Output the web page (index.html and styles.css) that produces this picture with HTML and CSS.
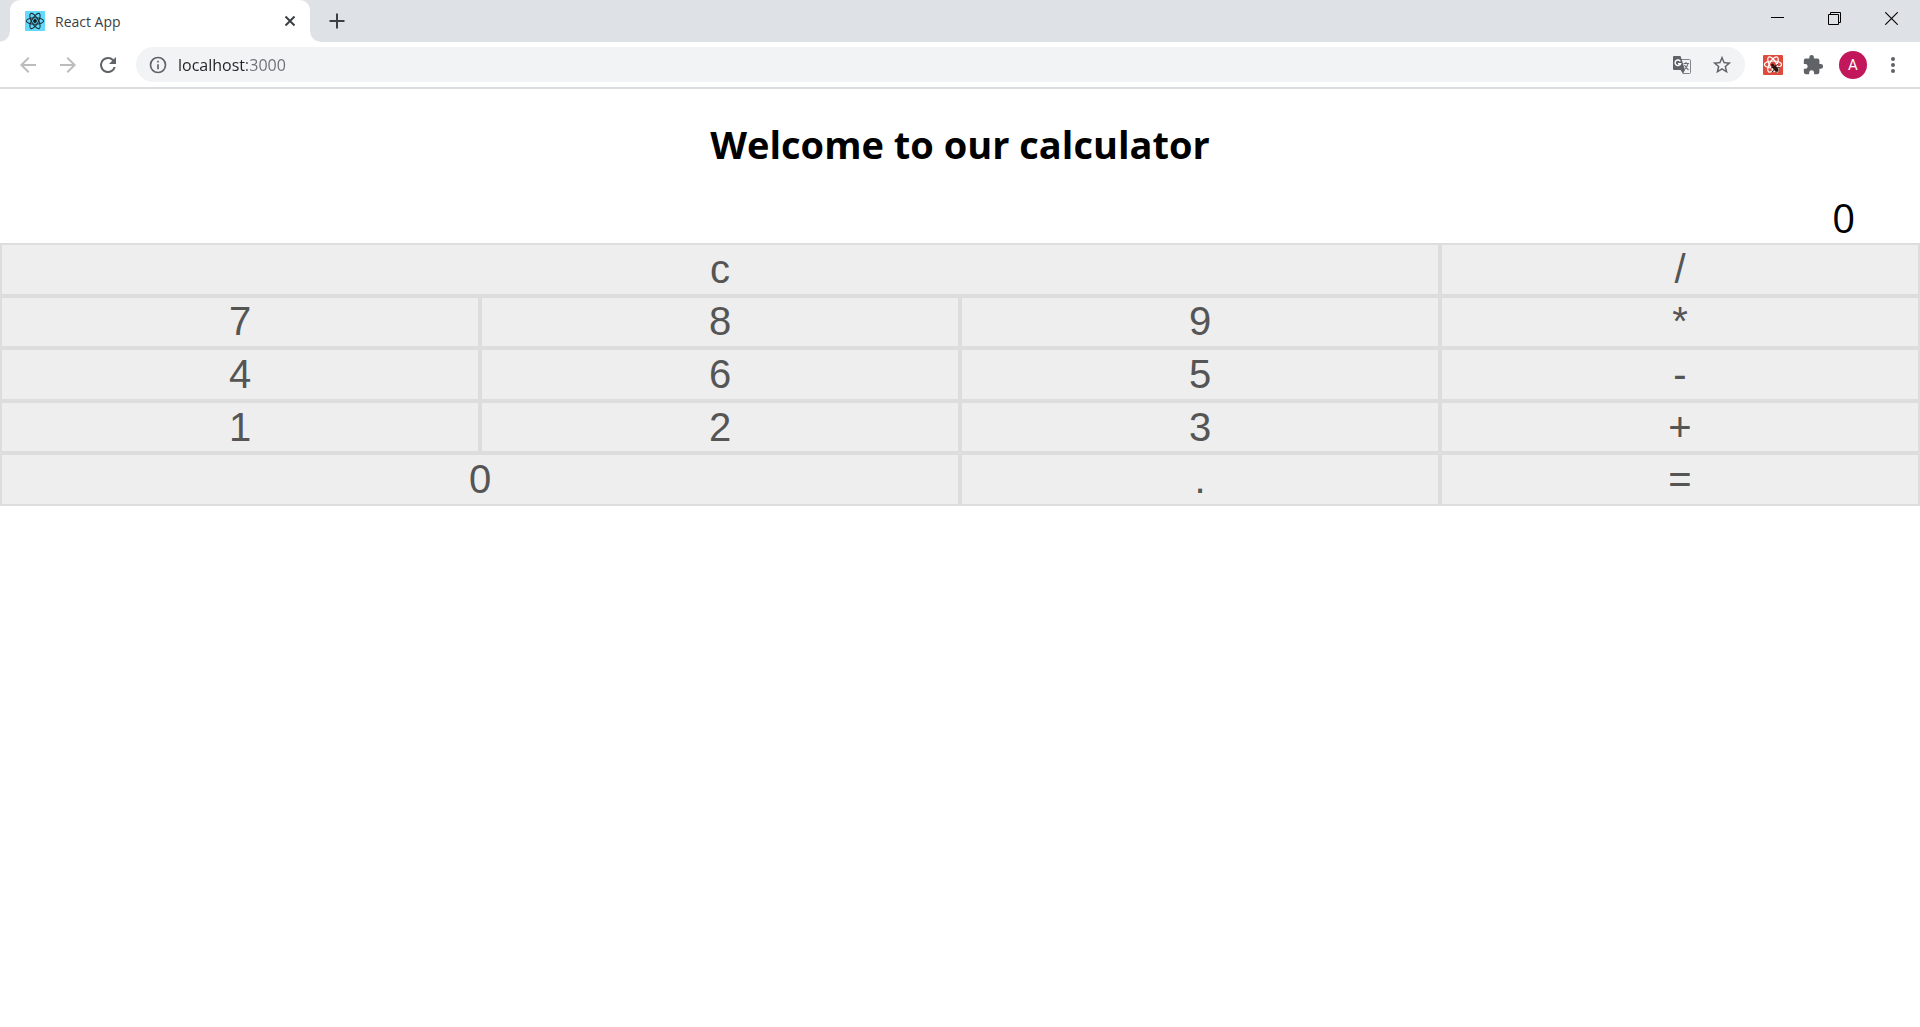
FILE: index.html
```html
<!DOCTYPE html>
<html lang="en">
<head>
<meta charset="utf-8">
<meta name="viewport" content="width=device-width, initial-scale=1">
<title>React App</title>
<link rel="stylesheet" href="styles.css">
</head>
<body>
<header class="browser">
  <div class="tab-strip">
    <div class="tab">
      <svg class="tab-favicon" width="20" height="20" viewBox="0 0 20 20" aria-hidden="true">
        <rect width="20" height="20" rx="1" fill="#61dafb"/>
        <g fill="none" stroke="#20303a" stroke-width="1.1">
          <ellipse cx="10" cy="10" rx="8.6" ry="3.3"/>
          <ellipse cx="10" cy="10" rx="8.6" ry="3.3" transform="rotate(60 10 10)"/>
          <ellipse cx="10" cy="10" rx="8.6" ry="3.3" transform="rotate(120 10 10)"/>
        </g>
        <circle cx="10" cy="10" r="1.9" fill="#101820"/>
      </svg>
      <span class="tab-title">React App</span>
      <button class="tab-close" type="button" aria-label="Close tab">
        <svg width="12" height="12" viewBox="0 0 12 12"><path d="M1.500 1.500l9 9M10.500 1.500l-9 9" stroke="#3c4043" stroke-width="2"/></svg>
      </button>
    </div>
    <button class="new-tab" type="button" aria-label="New tab">
      <svg width="16" height="16" viewBox="0 0 16 16"><path d="M8 .5v15M.5 8h15" stroke="#3c4043" stroke-width="2"/></svg>
    </button>
    <div class="window-controls">
      <button type="button" aria-label="Minimize"><svg width="13" height="13" viewBox="0 0 13 13"><path d="M0 5.500h13" stroke="#000"/></svg></button>
      <button type="button" aria-label="Restore"><svg width="13" height="13" viewBox="0 0 13 13"><path d="M.5 2.500h10v10h-10zM2.500 2.500v-2h10v10h-2" fill="none" stroke="#000"/></svg></button>
      <button type="button" aria-label="Close"><svg width="13" height="13" viewBox="0 0 13 13"><path d="M.3.3l12.400 12.400M12.700.3L.3 12.700" stroke="#000" stroke-width="1.1"/></svg></button>
    </div>
  </div>
  <div class="toolbar">
    <nav class="nav-buttons" aria-label="Navigation">
      <button class="icon-button" type="button" aria-label="Back"><svg width="24" height="24" viewBox="0 0 24 24" fill="#babcbe"><path d="M20 11H7.830l5.590-5.590L12 4l-8 8 8 8 1.410-1.410L7.830 13H20z"/></svg></button>
      <button class="icon-button" type="button" aria-label="Forward"><svg width="24" height="24" viewBox="0 0 24 24" fill="#babcbe"><path d="M12 4l-1.410 1.410L16.170 11H4v2h12.170l-5.580 5.590L12 20l8-8z"/></svg></button>
      <button class="icon-button" type="button" aria-label="Reload"><svg width="24" height="24" viewBox="0 0 24 24" fill="#5f6368"><path d="M17.650 6.350A7.960 7.960 0 0 0 12 4a8 8 0 1 0 7.730 10h-2.080A6 6 0 1 1 12 6c1.660 0 3.140.69 4.220 1.780L13 11h7V4z"/></svg></button>
    </nav>
    <div class="address-bar">
      <svg width="20" height="20" viewBox="0 0 24 24" fill="#5f6368" aria-hidden="true"><path d="M11 7h2v2h-2zm0 4h2v6h-2zm1-9a10 10 0 1 0 0 20 10 10 0 0 0 0-20zm0 18a8 8 0 1 1 0-16 8 8 0 0 1 0 16z"/></svg>
      <input class="address" type="text" value="localhost:3000" aria-label="Address">
      <button class="icon-button" type="button" aria-label="Translate this page">
        <svg width="18" height="18" viewBox="0 0 18 18">
          <path d="M8 3.500h8.500a1 1 0 0 1 1 1v12a1 1 0 0 1-1 1H10z" fill="#f1f3f4" stroke="#808387"/>
          <path d="M1 0h6.500l1 3L12 14H1a1 1 0 0 1-1-1V1a1 1 0 0 1 1-1zM7.500 14H12l-2 3.500z" fill="#5f6368"/>
          <path d="M7.300 5.300a2.800 2.800 0 1 0 .3 2.400H5" fill="none" stroke="#fff" stroke-width="1.400"/>
          <path d="M10.500 7.500h5.500M13 6v1.500M15 7.500c-.5 2.500-1.500 4-3 5.500M11.500 9c1 2 2.300 3.500 4 5" fill="none" stroke="#6b6e72" stroke-width="1.100"/>
        </svg>
      </button>
      <button class="icon-button" type="button" aria-label="Bookmark this page"><svg width="22" height="22" viewBox="0 0 24 24" fill="#5f6368"><path d="M22 9.240l-7.190-.62L12 2 9.190 8.630 2 9.240l5.460 4.730L5.820 21 12 17.270 18.180 21l-1.630-7.030zM12 15.400l-3.760 2.270 1-4.280-3.320-2.880 4.380-.38L12 6.100l1.710 4.040 4.380.38-3.320 2.880 1 4.280z"/></svg></button>
    </div>
    <div class="extension-buttons">
      <button class="icon-button" type="button" aria-label="React Developer Tools">
        <svg width="20" height="20" viewBox="0 0 20 20">
          <rect width="20" height="20" rx="1" fill="#de4b3c"/>
          <g fill="none" stroke="#fff" stroke-width="1.200">
            <ellipse cx="10" cy="9.500" rx="8.600" ry="3.500"/>
            <ellipse cx="10" cy="9.500" rx="8.600" ry="3.500" transform="rotate(60 10 9.500)"/>
            <ellipse cx="10" cy="9.500" rx="8.600" ry="3.500" transform="rotate(120 10 9.500)"/>
          </g>
          <ellipse cx="12.500" cy="13.500" rx="2" ry="3.800" transform="rotate(-40 12.500 13.500)" fill="#251615"/>
          <circle cx="9.500" cy="10" r="1.500" fill="#251615"/>
          <path d="M8 13l3-1M9 17l2.500-3M12 11l3-1.500M14 13l2.500-.5M13 18v-3" fill="none" stroke="#251615"/>
        </svg>
      </button>
      <button class="icon-button" type="button" aria-label="Extensions"><svg width="22" height="22" viewBox="0 0 24 24" fill="#5f6368"><path d="M20.500 11H19V7a2 2 0 0 0-2-2h-4V3.500a2.500 2.500 0 0 0-5 0V5H4a2 2 0 0 0-2 2v3.800h1.500a2.700 2.700 0 0 1 0 5.400H2V20a2 2 0 0 0 2 2h3.800v-1.500a2.700 2.700 0 0 1 5.400 0V22H17a2 2 0 0 0 2-2v-4h1.500a2.500 2.500 0 0 0 0-5z"/></svg></button>
      <button class="icon-button" type="button" aria-label="Profile"><span class="avatar">A</span></button>
      <button class="icon-button" type="button" aria-label="Menu"><svg width="24" height="24" viewBox="0 0 24 24" fill="#5f6368"><circle cx="12" cy="6" r="2"/><circle cx="12" cy="12" r="2"/><circle cx="12" cy="18" r="2"/></svg></button>
    </div>
  </div>
</header>
<main class="app">
  <h1 class="title">Welcome to our calculator</h1>
  <output class="display">0</output>
  <div class="keypad">
    <button class="key key-clear" type="button">c</button>
    <button class="key" type="button">/</button>
    <button class="key" type="button">7</button>
    <button class="key" type="button">8</button>
    <button class="key" type="button">9</button>
    <button class="key" type="button">*</button>
    <button class="key" type="button">4</button>
    <button class="key" type="button">6</button>
    <button class="key" type="button">5</button>
    <button class="key" type="button">-</button>
    <button class="key" type="button">1</button>
    <button class="key" type="button">2</button>
    <button class="key" type="button">3</button>
    <button class="key" type="button">+</button>
    <button class="key key-zero" type="button">0</button>
    <button class="key" type="button">.</button>
    <button class="key" type="button">=</button>
  </div>
</main>
</body>
</html>
```
FILE: styles.css
```css
* {
  box-sizing: border-box;
}

body {
  margin: 0;
  background: #fff;
  font-family: "Open Sans", "Noto Sans", sans-serif;
}

button {
  margin: 0;
  padding: 0;
  border: 0;
  background: none;
}

svg {
  display: block;
  flex: none;
}

.tab-strip {
  display: flex;
  height: 42px;
  padding-left: 10px;
  background: #dee1e6;
}

.tab {
  position: relative;
  display: flex;
  align-items: center;
  width: 300px;
  padding: 0 14px 0 15px;
  border-radius: 10px 10px 0 0;
  background: #fff;
}

/* Flared feet where the tab meets the toolbar */
.tab::before,
.tab::after {
  content: "";
  position: absolute;
  bottom: 0;
  width: 10px;
  height: 10px;
}

.tab::before {
  right: 100%;
  background: radial-gradient(circle at 0 0, #dee1e6 9px, #fff 10px);
}

.tab::after {
  left: 100%;
  background: radial-gradient(circle at 100% 0, #dee1e6 9px, #fff 10px);
}

.tab-title {
  flex: 1;
  margin-left: 10px;
  color: #3c4043;
  font-size: 14px;
}

.tab-close,
.new-tab {
  display: flex;
  align-items: center;
  justify-content: center;
}

.new-tab {
  width: 54px;
}

.window-controls {
  display: flex;
  margin-left: auto;
  height: 37px;
}

.window-controls button {
  display: flex;
  align-items: center;
  justify-content: center;
  width: 57px;
}

.toolbar {
  display: flex;
  align-items: center;
  gap: 8px;
  height: 47px;
  padding: 0 7px 0 8px;
  border-bottom: 2px solid #dadce0;
}

.nav-buttons,
.extension-buttons {
  display: flex;
}

.icon-button {
  display: flex;
  align-items: center;
  justify-content: center;
  width: 40px;
  height: 35px;
}

.address-bar {
  display: flex;
  flex: 1;
  align-items: center;
  height: 35px;
  padding: 0 3px 0 12px;
  border-radius: 18px;
  background: #f1f3f4;
}

/* The host is darker than the port that follows it */
.address {
  flex: 1;
  min-width: 0;
  margin-left: 10px;
  padding: 0;
  border: 0;
  outline: 0;
  background: linear-gradient(90deg, #202124 69px, #6b6f74 69px);
  background-clip: text;
  -webkit-background-clip: text;
  color: transparent;
  font-family: inherit;
  font-size: 16px;
}

.avatar {
  width: 28px;
  border-radius: 50%;
  background: #c2185b;
  color: #fff;
  font-family: Roboto, sans-serif;
  font-size: 15px;
  line-height: 28px;
  text-align: center;
}

.app {
  display: flex;
  flex-direction: column;
}

.title {
  margin: 29px 0 21px;
  color: #000;
  font-size: 38px;
  line-height: 53px;
  text-align: center;
}

.display {
  padding-right: 65px;
  color: #000;
  font-size: 40px;
  line-height: 51px;
  text-align: right;
}

.keypad {
  display: grid;
  grid-template-columns: repeat(4, 1fr);
  grid-template-rows: repeat(5, 1fr);
  min-height: 263px;
}

.key {
  border: 2px solid #ddd;
  background: #eee;
  color: #555;
  font-family: "Liberation Sans", Arial, sans-serif;
  font-size: 40px;
}

.key-clear {
  grid-column: span 3;
}

.key-zero {
  grid-column: span 2;
}
```
